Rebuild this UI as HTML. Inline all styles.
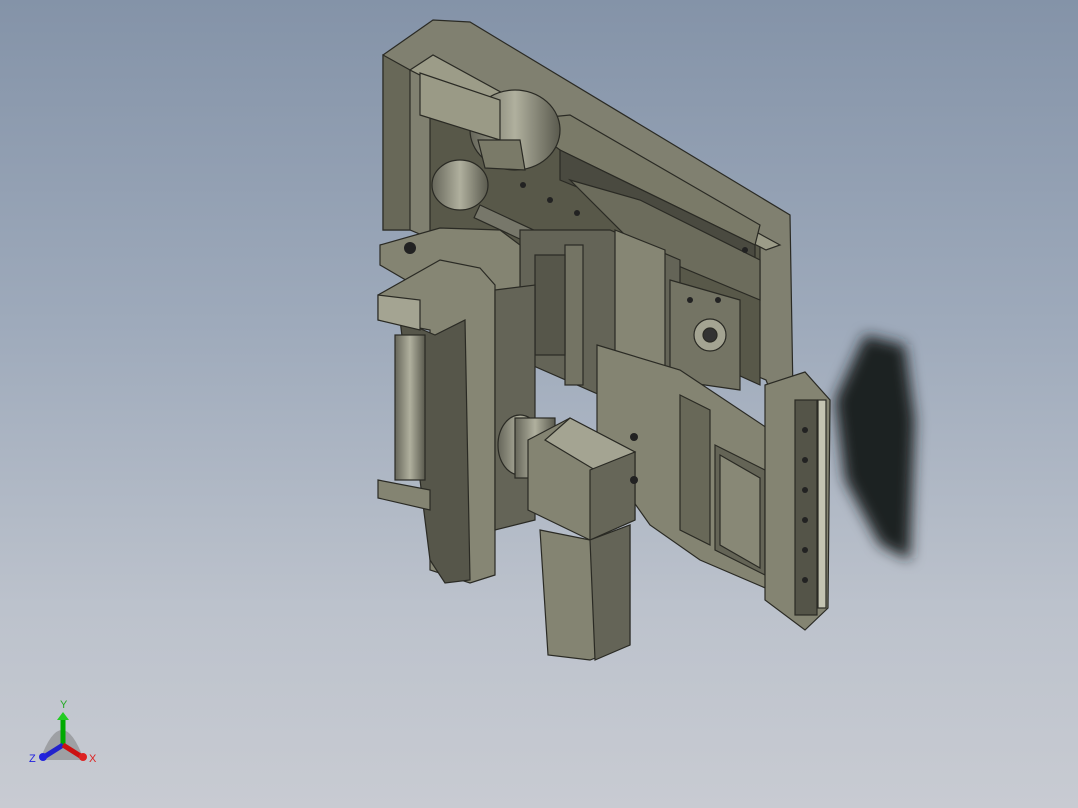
<!DOCTYPE html>
<html><head><style>
html,body{margin:0;padding:0;width:1078px;height:808px;overflow:hidden;}
body{background:linear-gradient(180deg,#8493a8 0%,#9eaabb 40%,#bcc2cc 75%,#c8cbd2 100%);}
svg{position:absolute;left:0;top:0}
</style></head><body>
<svg width="1078" height="808" viewBox="0 0 1078 808">
<defs>
<filter id="bl" x="-50%" y="-50%" width="200%" height="200%"><feGaussianBlur stdDeviation="7"/></filter>
<linearGradient id="cyl" x1="0" x2="1"><stop offset="0" stop-color="#66665a"/><stop offset=".5" stop-color="#b0b09e"/><stop offset="1" stop-color="#5a5a4e"/></linearGradient>
</defs>
<path d="M865 335 L905 345 L915 420 L910 560 L880 545 L845 480 L835 400 Z" fill="#1e2024" filter="url(#bl)"/>
<g stroke="#2a2a24" stroke-width="1.2">
<polygon points="383,55 433,20 470,22 790,215 793,395 770,390 766,380 410,230 383,230" fill="#808070"/>
<polygon points="383,55 410,70 410,230 383,230" fill="#686858"/>
<polygon points="430,70 440,60 760,240 760,385 430,235" fill="#585849"/>
<polygon points="410,70 433,55 780,245 766,250" fill="#9c9c88"/>
<polygon points="520,120 570,115 760,225 755,245 560,150" fill="#7a7a68"/>
<polygon points="560,150 755,245 755,260 560,180" fill="#4a4a40"/>
<polygon points="570,180 640,200 760,260 760,300 640,250" fill="#6c6c5c"/>
<ellipse cx="515" cy="130" rx="45" ry="40" fill="url(#cyl)"/>
<polygon points="420,73 500,100 500,140 420,115" fill="#9a9a86"/>
<polygon points="478,140 520,140 525,170 485,168" fill="#7a7a68"/>
<ellipse cx="460" cy="185" rx="28" ry="25" fill="url(#cyl)"/>
<rect x="480" y="205" width="70" height="14" fill="#77776a" transform="rotate(25 480 205)"/>
<polygon points="520,230 610,230 680,260 680,390 600,395 520,360" fill="#646457"/>
<polygon points="615,230 665,250 665,380 615,360" fill="#868674"/>
<polygon points="670,280 740,300 740,390 670,380" fill="#747464"/>
<circle cx="710" cy="335" r="16" fill="#a4a492"/>
<circle cx="710" cy="335" r="7" fill="#333"/>
<rect x="565" y="245" width="18" height="140" fill="#747464"/>
<rect x="535" y="255" width="30" height="100" fill="#56564a"/>
<polygon points="380,245 440,228 500,230 520,245 520,300 440,300 380,265" fill="#848472"/>
<polygon points="378,295 440,260 480,268 495,285 495,575 470,583 430,570 430,330 378,320" fill="#868674"/>
<polygon points="400,320 435,335 465,320 470,580 445,583 430,560" fill="#56564a"/>
<polygon points="378,295 420,300 420,330 378,320" fill="#a4a492"/>
<rect x="395" y="335" width="30" height="145" fill="url(#cyl)"/>
<polygon points="378,480 430,490 430,510 378,498" fill="#848472"/>
<polygon points="495,290 535,285 535,520 495,530" fill="#646457"/>
<polygon points="597,345 680,370 770,430 770,590 700,560 650,525 597,450" fill="#848472"/>
<polygon points="680,395 710,410 710,545 680,530" fill="#686858"/>
<polygon points="715,445 765,470 765,575 715,550" fill="#646456"/>
<polygon points="720,455 760,478 760,568 720,545" fill="#888876"/>
<polygon points="765,385 805,372 830,400 828,608 805,630 765,600" fill="#848472"/>
<rect x="795" y="400" width="22" height="215" fill="#545448"/>
<rect x="818" y="400" width="8" height="208" fill="#c4c4b2"/>
<ellipse cx="520" cy="445" rx="22" ry="30" fill="url(#cyl)"/>
<rect x="515" y="418" width="40" height="60" fill="url(#cyl)"/>
<polygon points="528,440 570,418 635,452 635,520 590,540 528,510" fill="#848472"/>
<polygon points="570,418 635,452 595,470 545,440" fill="#a4a492"/>
<polygon points="590,470 635,452 635,520 590,540" fill="#666658"/>
<polygon points="540,530 590,540 630,525 630,645 590,660 548,655" fill="#848472"/>
<polygon points="590,540 630,525 630,645 595,660" fill="#646457"/>
</g>
<g fill="#222">
<circle cx="523" cy="185" r="3"/><circle cx="550" cy="200" r="3"/><circle cx="577" cy="213" r="3"/>
<circle cx="634" cy="437" r="4"/><circle cx="634" cy="480" r="4"/><circle cx="745" cy="250" r="3"/>
<circle cx="805" cy="430" r="3"/><circle cx="805" cy="460" r="3"/><circle cx="805" cy="490" r="3"/><circle cx="805" cy="520" r="3"/><circle cx="805" cy="550" r="3"/><circle cx="805" cy="580" r="3"/>
<circle cx="410" cy="248" r="6"/><circle cx="718" cy="300" r="3"/><circle cx="690" cy="300" r="3"/>
</g>
<path d="M40 760 Q62 700 84 760 Z" fill="#777" opacity=".5"/>
<line x1="63" y1="745" x2="63" y2="718" stroke="#0a0" stroke-width="5"/>
<polygon points="57,720 63,712 69,720" fill="#2c2"/>
<line x1="63" y1="745" x2="44" y2="757" stroke="#22c" stroke-width="5"/>
<circle cx="43" cy="757" r="4" fill="#22d"/>
<line x1="63" y1="745" x2="82" y2="757" stroke="#c11" stroke-width="5"/>
<circle cx="83" cy="757" r="4" fill="#d22"/>
<text x="60" y="708" font-family="Liberation Sans, sans-serif" font-size="11" fill="#2a2">Y</text>
<text x="29" y="762" font-family="Liberation Sans, sans-serif" font-size="11" fill="#22d">Z</text>
<text x="89" y="762" font-family="Liberation Sans, sans-serif" font-size="11" fill="#d22">X</text>
</svg>
</body></html>
